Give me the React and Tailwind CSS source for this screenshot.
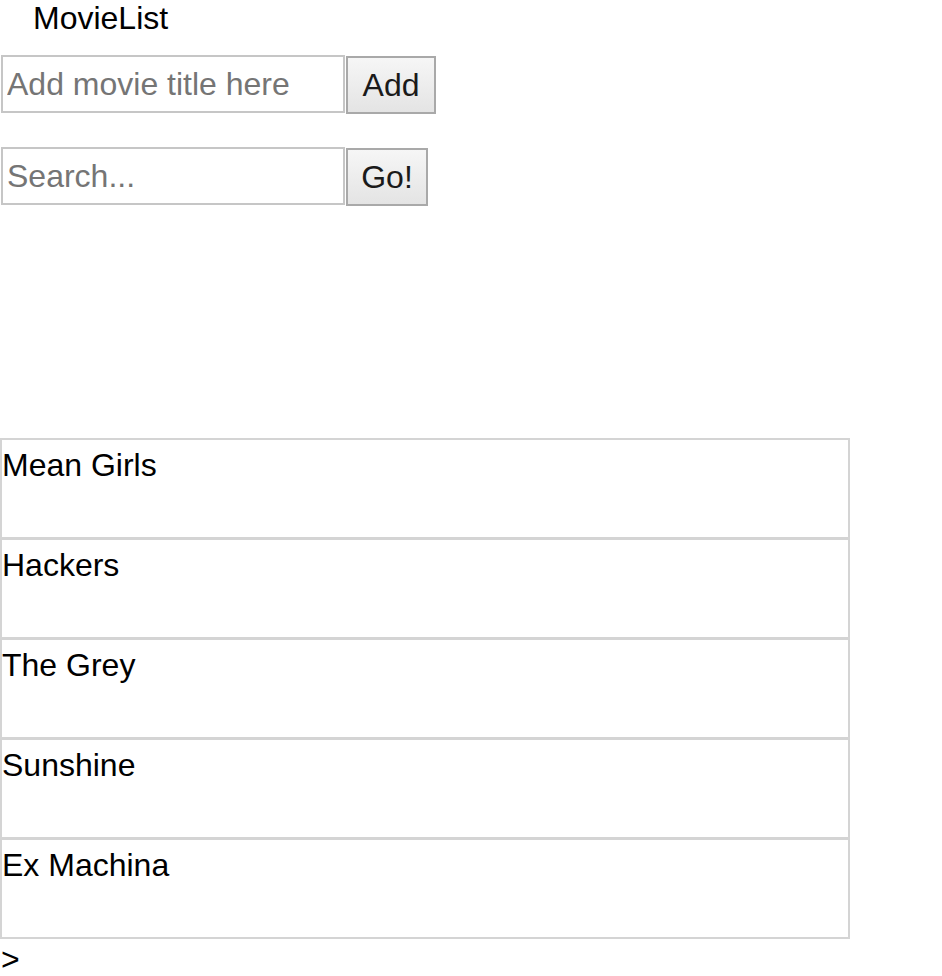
export default function App() {
  const movies = ["Mean Girls", "Hackers", "The Grey", "Sunshine", "Ex Machina"];
  return (
    <div className="w-[942px] min-h-[976px] bg-white text-black text-[32px]" style={{ fontFamily: '"Liberation Sans", Arial, sans-serif' }}>
      <div className="pl-[33px] leading-[normal] h-[37px]">MovieList</div>
      <div className="flex items-start mt-[18px] ml-px">
        <input
          className="w-[344px] h-[58px] border-2 border-[#c6c6c6] px-[4px] text-[32px] placeholder:text-[#757575] outline-none"
          placeholder="Add movie title here"
        />
        <button className="mt-px ml-px w-[90px] h-[58px] border-2 border-[#a9a9a9] bg-gradient-to-b from-[#f6f6f6] to-[#e4e4e4] text-[32px] text-[#1a1a1a]">
          Add
        </button>
      </div>
      <div className="flex items-start mt-[33px] ml-px">
        <input
          className="w-[344px] h-[58px] border-2 border-[#c6c6c6] px-[4px] text-[32px] placeholder:text-[#757575] outline-none"
          placeholder="Search..."
        />
        <button className="mt-px ml-px w-[82px] h-[58px] border-2 border-[#a9a9a9] bg-gradient-to-b from-[#f6f6f6] to-[#e4e4e4] text-[32px] text-[#1a1a1a]">
          Go!
        </button>
      </div>
      <div className="mt-[232px] w-[850px]">
        {movies.map((m, i) => (
          <div
            key={m}
            className={
              i === 0
                ? "h-[101px] border-2 border-[#d4d4d4] pt-[7px] leading-[normal]"
                : "-mt-px h-[101px] border-2 border-[#d4d4d4] pt-[7px] leading-[normal]"
            }
          >
            {m}
          </div>
        ))}
      </div>
      <div className="pl-px mt-[8px] leading-[24px]">&gt;</div>
    </div>
  );
}
